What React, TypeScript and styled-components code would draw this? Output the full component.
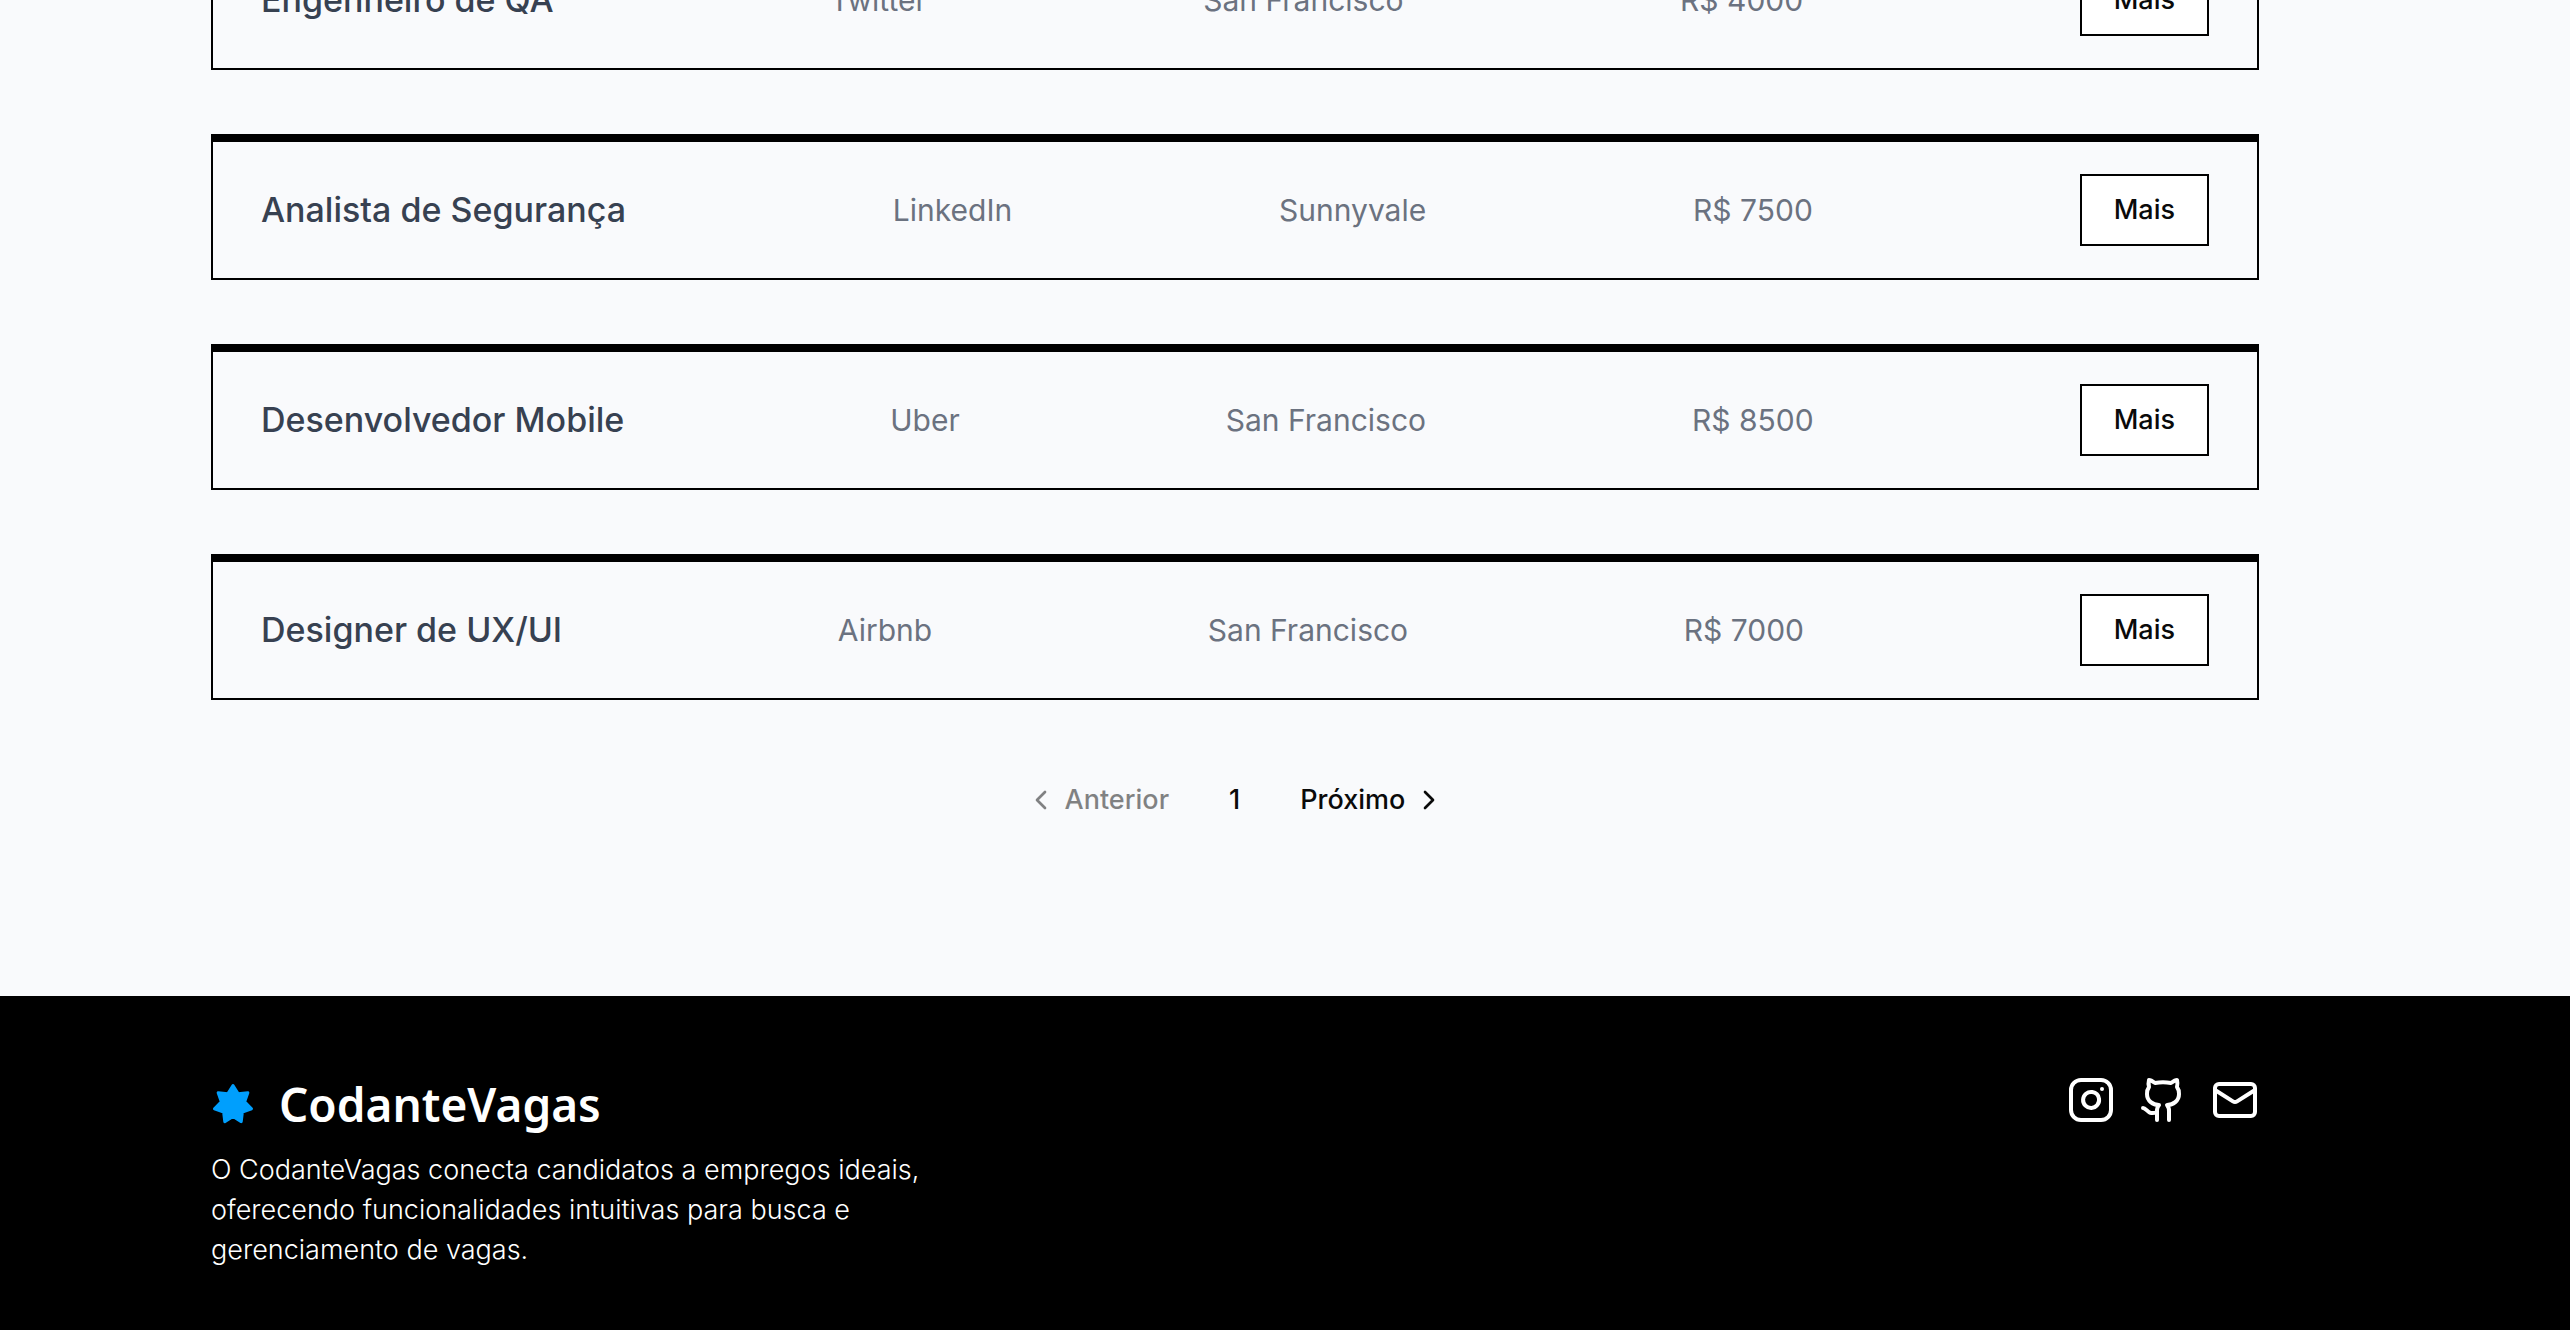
import React from "react";
import styled, { createGlobalStyle } from "styled-components";

const GlobalStyle = createGlobalStyle`
  *, *::before, *::after { box-sizing: border-box; }
  body {
    margin: 0;
    background: #f9fafc;
    font-family: Inter, "Liberation Sans", sans-serif;
    color: #0a0a0a;
  }
`;

/* The page is anchored to its end, so the footer is always in view. */
const Page = styled.div`
  height: 100vh;
  overflow: hidden;
  display: flex;
  flex-direction: column;
  justify-content: flex-end;
`;

const Main = styled.main`
  flex-shrink: 0;
  padding: 0 311px 160px 211px;
`;

const JobList = styled.ul`
  list-style: none;
  margin: 0;
  padding: 0;
  display: flex;
  flex-direction: column;
  gap: 64px;
`;

const JobCard = styled.li`
  display: flex;
  align-items: center;
  justify-content: space-between;
  padding: 32px 48px;
  border: 2px solid #000;
  border-top-width: 8px;
`;

const JobTitle = styled.h2`
  margin: 0;
  font-size: 34px;
  line-height: 56px;
  font-weight: 500;
  color: #374151;
`;

const JobMeta = styled.p`
  margin: 0;
  font-size: 30px;
  line-height: 48px;
  color: #6b7280;
`;

const MoreButton = styled.button`
  height: 72px;
  padding: 0 32px;
  border: 2px solid #000;
  background: #fff;
  color: #0a0a0a;
  font: 500 27px/40px Inter, "Liberation Sans", sans-serif;
  cursor: pointer;
`;

const Pagination = styled.nav`
  display: flex;
  justify-content: center;
  gap: 8px;
  margin-top: 64px;
`;

const PageButton = styled.button<{ $kind: "prev" | "page" | "next" }>`
  display: flex;
  align-items: center;
  gap: 8px;
  height: 72px;
  padding: ${({ $kind }) =>
    $kind === "prev" ? "0 32px 0 20px" : $kind === "next" ? "0 20px 0 32px" : "0 20px"};
  border: 0;
  background: transparent;
  color: #0a0a0a;
  font: 500 27px/40px Inter, "Liberation Sans", sans-serif;
  cursor: pointer;

  &:disabled {
    opacity: 0.5;
    cursor: default;
  }
`;

const Footer = styled.footer`
  flex-shrink: 0;
  display: flex;
  align-items: flex-start;
  justify-content: space-between;
  padding: 80px 311px 60px 211px;
  background: #000;
  color: #fff;
`;

const Brand = styled.div`
  display: flex;
  flex-direction: column;
  gap: 18px;
  max-width: 768px;
`;

const Logo = styled.a`
  display: flex;
  align-items: center;
  gap: 24px;
  color: inherit;
  text-decoration: none;
  font: 600 46px/56px "Noto Sans", "Liberation Sans", sans-serif;
`;

const Tagline = styled.p`
  margin: 0;
  font-size: 27px;
  line-height: 40px;
  font-weight: 300;
`;

const Socials = styled.div`
  display: flex;
  gap: 24px;
`;

const SocialLink = styled.a`
  display: flex;
  color: inherit;
`;

const StrokeIcon = styled.svg.attrs<{ $size: number }>({
  viewBox: "0 0 24 24",
  "aria-hidden": true,
})<{ $size: number }>`
  width: ${({ $size }) => $size}px;
  height: ${({ $size }) => $size}px;
  fill: none;
  stroke: currentColor;
  stroke-width: 2;
  stroke-linecap: round;
  stroke-linejoin: round;
`;

const StarShape = styled.svg`
  width: 44px;
  height: 44px;
  fill: #009ffd;
  stroke: #009ffd;
  stroke-width: 3;
  stroke-linejoin: round;
`;

const starPoints = Array.from({ length: 14 }, (_, i) => {
  const radius = i % 2 === 0 ? 19 : 12;
  const angle = (Math.PI * i) / 7 - Math.PI / 2;
  return `${(22 + radius * Math.cos(angle)).toFixed(2)},${(22.5 + radius * Math.sin(angle)).toFixed(2)}`;
}).join(" ");

const jobs = [
  { title: "Engenheiro de QA", company: "Twitter", city: "San Francisco", salary: "R$ 4000" },
  { title: "Analista de Segurança", company: "LinkedIn", city: "Sunnyvale", salary: "R$ 7500" },
  { title: "Desenvolvedor Mobile", company: "Uber", city: "San Francisco", salary: "R$ 8500" },
  { title: "Designer de UX/UI", company: "Airbnb", city: "San Francisco", salary: "R$ 7000" },
];

export default function App() {
  return (
    <Page>
      <GlobalStyle />
      <Main>
        <JobList>
          {jobs.map((job) => (
            <JobCard key={job.title}>
              <JobTitle>{job.title}</JobTitle>
              <JobMeta>{job.company}</JobMeta>
              <JobMeta>{job.city}</JobMeta>
              <JobMeta>{job.salary}</JobMeta>
              <MoreButton type="button">Mais</MoreButton>
            </JobCard>
          ))}
        </JobList>
        <Pagination>
          <PageButton type="button" $kind="prev" disabled>
            <StrokeIcon $size={32}>
              <path d="m15 18-6-6 6-6" />
            </StrokeIcon>
            Anterior
          </PageButton>
          <PageButton type="button" $kind="page">1</PageButton>
          <PageButton type="button" $kind="next">
            Próximo
            <StrokeIcon $size={32}>
              <path d="m9 18 6-6-6-6" />
            </StrokeIcon>
          </PageButton>
        </Pagination>
      </Main>
      <Footer>
        <Brand>
          <Logo href="#">
            <StarShape viewBox="0 0 44 44" aria-hidden="true">
              <polygon points={starPoints} />
            </StarShape>
            CodanteVagas
          </Logo>
          <Tagline>
            O CodanteVagas conecta candidatos a empregos ideais, oferecendo funcionalidades
            intuitivas para busca e gerenciamento de vagas.
          </Tagline>
        </Brand>
        <Socials>
          <SocialLink href="#" aria-label="Instagram">
            <StrokeIcon $size={48}>
              <rect width="20" height="20" x="2" y="2" rx="5" ry="5" />
              <path d="M16 11.37A4 4 0 1 1 12.63 8 4 4 0 0 1 16 11.37z" />
              <line x1="17.5" x2="17.51" y1="6.5" y2="6.5" />
            </StrokeIcon>
          </SocialLink>
          <SocialLink href="#" aria-label="GitHub">
            <StrokeIcon $size={48}>
              <path d="M15 22v-4a4.8 4.8 0 0 0-1-3.5c3 0 6-2 6-5.5.08-1.25-.27-2.48-1-3.5.28-1.15.28-2.35 0-3.5 0 0-1 0-3 1.5-2.64-.5-5.36-.5-8 0C6 2 5 2 5 2c-.3 1.15-.3 2.35 0 3.5A5.403 5.403 0 0 0 4 9c0 3.5 3 5.5 6 5.5-.39.49-.68 1.05-.85 1.65-.17.6-.22 1.23-.15 1.85v4" />
              <path d="M9 18c-4.51 2-5-2-7-2" />
            </StrokeIcon>
          </SocialLink>
          <SocialLink href="#" aria-label="E-mail">
            <StrokeIcon $size={48}>
              <rect width="20" height="16" x="2" y="4" rx="2" />
              <path d="m22 7-8.97 5.7a1.94 1.94 0 0 1-2.06 0L2 7" />
            </StrokeIcon>
          </SocialLink>
        </Socials>
      </Footer>
    </Page>
  );
}
